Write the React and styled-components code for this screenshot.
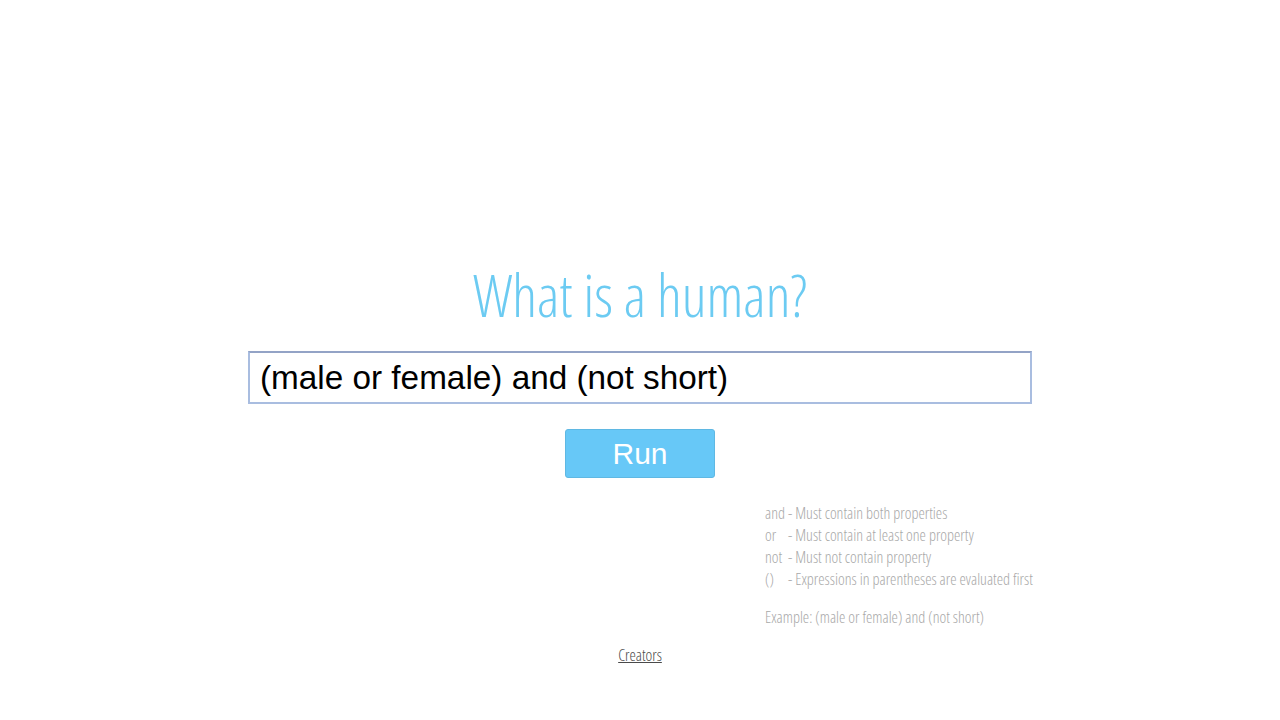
import React, { useState } from "react";
import styled, { createGlobalStyle } from "styled-components";

const GlobalStyle = createGlobalStyle`
  html, body {
    margin: 0;
    padding: 0;
    background: #ffffff;
  }
  body {
    font-family: "Open Sans", "Liberation Sans", sans-serif;
  }
`;

const Page = styled.div`
  width: 1280px;
  height: 720px;
  display: flex;
  flex-direction: column;
  align-items: center;
  padding-top: 258px;
  box-sizing: border-box;
`;

const Title = styled.h1`
  margin: 0;
  font-family: "Open Sans", sans-serif;
  font-stretch: 75%;
  font-weight: 300;
  font-size: 58px;
  line-height: 74px;
  color: #6ccbf2;
`;

const QueryInput = styled.input`
  margin-top: 19px;
  width: 784px;
  height: 53px;
  box-sizing: border-box;
  border: 2px solid #a9bde0;
  border-top-color: #93a3c6;
  padding: 0 10px;
  font-family: "Liberation Sans", Arial, sans-serif;
  font-size: 33.3px;
  color: #000;
  outline: none;
`;

const RunButton = styled.button`
  margin-top: 25px;
  width: 150px;
  height: 49px;
  background: #67c8f7;
  border: 1px solid #5fb8e3;
  border-radius: 3px;
  color: #fff;
  font-family: "Liberation Sans", Arial, sans-serif;
  font-size: 30px;
  cursor: pointer;
`;

const Help = styled.div`
  align-self: flex-start;
  margin-left: 765px;
  margin-top: 24px;
  font-family: "Open Sans", sans-serif;
  font-stretch: 75%;
  font-weight: 300;
  font-size: 16px;
  color: #a8a8a8;
`;

const Rules = styled.div`
  display: grid;
  grid-template-columns: 23px auto;
  line-height: 22px;
`;

const Keyword = styled.span``;

const Rule = styled.span``;

const Example = styled.div`
  margin-top: 16px;
  line-height: 22px;
`;

const Footer = styled.a`
  margin-top: 16px;
  font-family: "Open Sans", sans-serif;
  font-stretch: 75%;
  font-weight: 300;
  font-size: 16px;
  color: #4a4a4a;
  text-decoration: underline;
`;

const rules = [
  ["and", "- Must contain both properties"],
  ["or", "- Must contain at least one property"],
  ["not", "- Must not contain property"],
  ["()", "- Expressions in parentheses are evaluated first"],
];

export default function App() {
  const [query, setQuery] = useState("(male or female) and (not short)");

  return (
    <>
      <GlobalStyle />
      <Page>
        <Title>What is a human?</Title>
        <QueryInput value={query} onChange={(e) => setQuery(e.target.value)} />
        <RunButton>Run</RunButton>
        <Help>
          <Rules>
            {rules.map(([k, r]) => (
              <React.Fragment key={k}>
                <Keyword>{k}</Keyword>
                <Rule>{r}</Rule>
              </React.Fragment>
            ))}
          </Rules>
          <Example>Example: (male or female) and (not short)</Example>
        </Help>
        <Footer href="#">Creators</Footer>
      </Page>
    </>
  );
}
